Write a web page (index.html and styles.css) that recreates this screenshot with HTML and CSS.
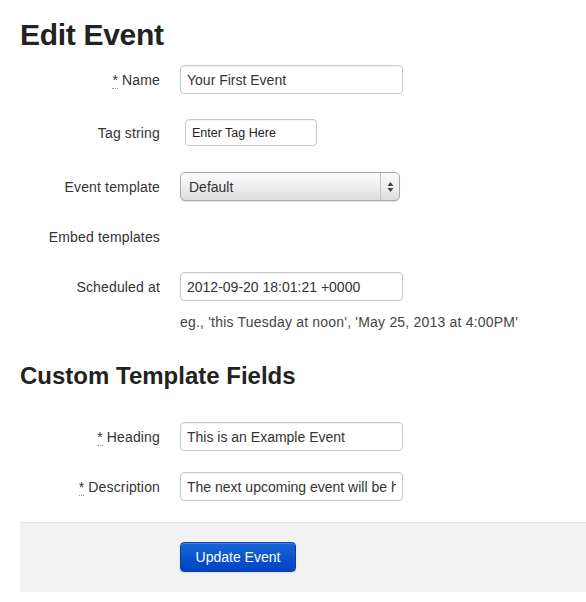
FILE: index.html
```html
<!DOCTYPE html>
<html>
<head>
<meta charset="utf-8">
<link rel="stylesheet" href="styles.css">
</head>
<body>
<div class="page">
  <h1 class="title">Edit Event</h1>
  <form class="form">
    <div class="group g-name">
      <label class="label"><abbr class="req">*</abbr> Name</label>
      <div class="controls"><input class="input" type="text" value="Your First Event"></div>
    </div>
    <div class="group g-tag">
      <label class="label">Tag string</label>
      <div class="controls"><input class="input input-tag" type="text" value="Enter Tag Here"></div>
    </div>
    <div class="group g-template">
      <label class="label">Event template</label>
      <div class="controls">
        <div class="select">
          <span class="select-text">Default</span>
          <span class="select-arrows">
            <svg width="7" height="12" viewBox="0 0 7 12"><path d="M3.5 1 L6.5 5 L0.5 5 Z" fill="#444"/><path d="M3.5 11 L6.5 7 L0.5 7 Z" fill="#444"/></svg>
          </span>
        </div>
      </div>
    </div>
    <div class="group g-embed">
      <label class="label">Embed templates</label>
      <div class="controls"></div>
    </div>
    <div class="group g-sched">
      <label class="label">Scheduled at</label>
      <div class="controls">
        <input class="input" type="text" value="2012-09-20 18:01:21 +0000">
      </div>
    </div>
    <div class="help-row">
      <p class="help">eg., 'this Tuesday at noon', 'May 25, 2013 at 4:00PM'</p>
    </div>
    <h2 class="subtitle">Custom Template Fields</h2>
    <div class="group g-heading">
      <label class="label"><abbr class="req">*</abbr> Heading</label>
      <div class="controls"><input class="input" type="text" value="This is an Example Event"></div>
    </div>
    <div class="group g-desc">
      <label class="label"><abbr class="req">*</abbr> Description</label>
      <div class="controls"><input class="input" type="text" value="The next upcoming event will be held"></div>
    </div>
    <div class="actions">
      <button class="btn" type="button">Update Event</button>
    </div>
  </form>
</div>
</body>
</html>
```

FILE: styles.css
```css
* { box-sizing: border-box; }
html, body { margin: 0; padding: 0; background: #fff; }
body {
  font-family: "Liberation Sans", Arial, Helvetica, sans-serif;
  font-size: 14px;
  color: #333;
}
.page { padding-left: 20px; padding-top: 17px; }
.title {
  margin: 0;
  font-size: 30px;
  line-height: 36px;
  font-weight: bold;
  color: #222;
  letter-spacing: -0.3px;
}
.form { margin: 0; }
.group { display: flex; align-items: center; height: 29px; }
.label {
  width: 160px;
  flex: none;
  padding-right: 20px;
  text-align: right;
  font-size: 14px;
  color: #333;
  line-height: 20px;
  letter-spacing: 0.15px;
}
.req {
  text-decoration: none;
  border-bottom: 1px dotted #999;
  cursor: help;
}
.controls { display: flex; align-items: center; }
.input {
  width: 223px;
  height: 29px;
  padding: 4px 6px;
  border: 1px solid #c8c8c8;
  border-radius: 4px;
  box-shadow: inset 0 1px 1px rgba(0,0,0,0.06);
  font-family: "Liberation Sans", Arial, Helvetica, sans-serif;
  font-size: 14px;
  color: #333;
  background: #fff;
  outline: none;
}
.g-name { margin-top: 12px; }
.g-tag { margin-top: 25px; height: 27px; }
.input-tag {
  margin-left: 5px;
  width: 132px;
  height: 27px;
  font-size: 12.5px;
  padding: 4px 6px;
  color: #222;
}
.g-template { margin-top: 26px; }
.select {
  width: 220px;
  height: 29px;
  display: flex;
  align-items: center;
  border: 1px solid #a9a9a9;
  border-radius: 5px;
  background: linear-gradient(#fbfbfb, #f0f0f0 45%, #dcdcdc);
  box-shadow: 0 1px 1px rgba(0,0,0,0.12);
}
.select-text {
  flex: 1;
  padding-left: 8px;
  font-size: 14px;
  color: #333;
}
.select-arrows {
  width: 19px;
  height: 100%;
  border-left: 1px solid #c4c4c4;
  display: flex;
  align-items: center;
  justify-content: center;
}
.select-arrows svg { display: block; }
.g-embed { margin-top: 21px; }
.g-sched { margin-top: 21px; }
.help-row { padding-left: 160px; margin-top: 11px; }
.help {
  margin: 0;
  line-height: 20px;
  font-size: 14px;
  color: #444;
  letter-spacing: 0.2px;
}
.subtitle {
  margin: 29px 0 0;
  font-size: 24px;
  line-height: 30px;
  font-weight: bold;
  color: #222;
  letter-spacing: 0;
}
.g-heading { margin-top: 31px; }
.g-desc { margin-top: 21px; }
.actions {
  margin-top: 21px;
  height: 70px;
  padding: 19px 0 0 160px;
  background: #f2f2f2;
  border-top: 1px solid #e2e2e2;
}
.btn {
  width: 116px;
  height: 30px;
  border: 1px solid #0a3fa8;
  border-radius: 4px;
  background: linear-gradient(#1566d6, #0043c4);
  color: #fff;
  font-family: "Liberation Sans", Arial, Helvetica, sans-serif;
  font-size: 14px;
  padding: 0;
  box-shadow: inset 0 1px 0 rgba(255,255,255,0.2), 0 1px 2px rgba(0,0,0,0.1);
}
```
